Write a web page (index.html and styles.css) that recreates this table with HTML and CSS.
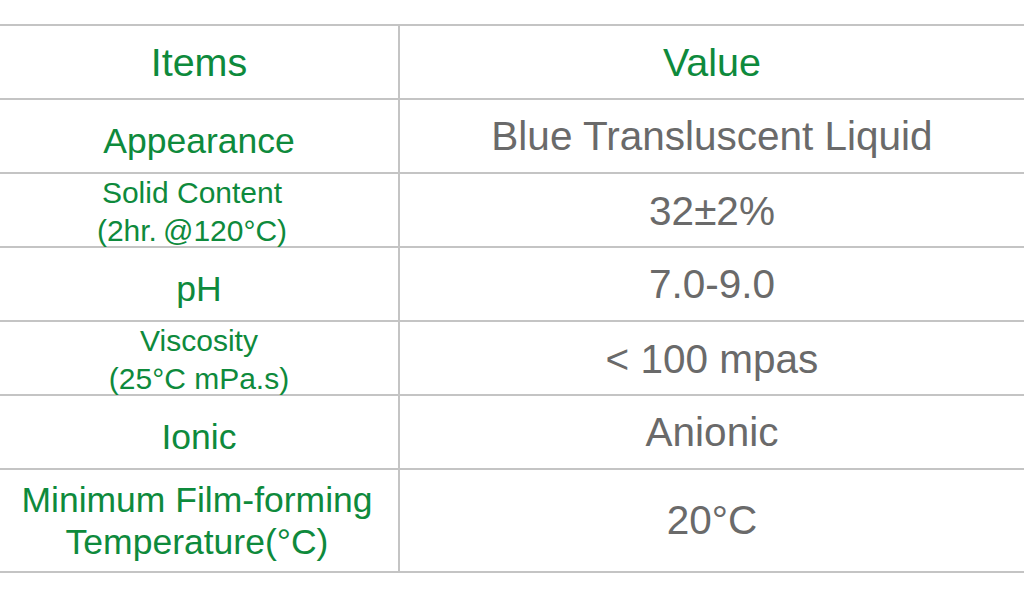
FILE: index.html
```html
<!DOCTYPE html>
<html lang="en">
<head>
<meta charset="utf-8">
<title>Specifications</title>
<link rel="stylesheet" href="styles.css">
</head>
<body>
<div class="spec">
  <div class="row head">
    <div class="cell item">Items</div>
    <div class="cell value">Value</div>
  </div>
  <div class="row">
    <div class="cell item single">Appearance</div>
    <div class="cell value">Blue Transluscent Liquid</div>
  </div>
  <div class="row">
    <div class="cell item small shifted">Solid Content<br>(2hr.&thinsp;@120°C)</div>
    <div class="cell value">32±2%</div>
  </div>
  <div class="row">
    <div class="cell item single">pH</div>
    <div class="cell value">7.0-9.0</div>
  </div>
  <div class="row">
    <div class="cell item small">Viscosity<br>(25°C mPa.s)</div>
    <div class="cell value">&lt; 100 mpas</div>
  </div>
  <div class="row">
    <div class="cell item single">Ionic</div>
    <div class="cell value">Anionic</div>
  </div>
  <div class="row tall">
    <div class="cell item double">Minimum Film-forming<br>Temperature(°C)</div>
    <div class="cell value">20°C</div>
  </div>
</div>
</body>
</html>
```

FILE: styles.css
```css
html, body {
  margin: 0;
  padding: 0;
  background: #ffffff;
}

body {
  font-family: "Liberation Sans", Arial, Helvetica, sans-serif;
}

.spec {
  margin-top: 24px;
  width: 1024px;
  border-top: 2px solid #c4c4c4;
}

.row {
  display: grid;
  grid-template-columns: 400px 1fr;
  height: 74px;
  box-sizing: border-box;
  border-bottom: 2px solid #c4c4c4;
}

.row.tall {
  height: 103px;
}

.cell {
  display: flex;
  align-items: center;
  justify-content: center;
  text-align: center;
  white-space: nowrap;
}

.item {
  border-right: 2px solid #c4c4c4;
  color: #0e8a3c;
  font-size: 35.5px;
}

.item.single {
  padding-top: 10px;
}

.item.small {
  font-size: 30px;
  line-height: 37.5px;
}

.item.shifted {
  padding-right: 14px;
}

.item.double {
  font-size: 35.5px;
  line-height: 42px;
  padding-right: 4px;
}

.value {
  color: #6a6a6a;
  font-size: 40.5px;
}

.head .cell {
  color: #0e8a3c;
  font-size: 39.5px;
}
```
